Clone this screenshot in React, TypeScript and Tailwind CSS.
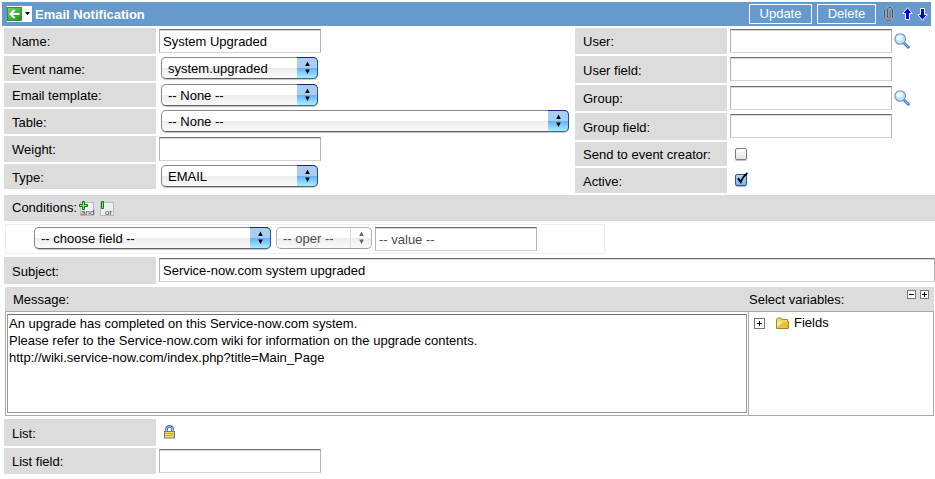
import type { ReactNode } from "react";

const fieldBox =
  "h-6 border border-[#b5b5b5] border-t-[#6f6f6f] border-b-[#d4d4d4] bg-white px-[3px] shadow-[inset_0_1px_0_#d8d8d8] outline-none";

function Row({ id, label, h, children }: { id: string; label: string; h: string; children: ReactNode }) {
  return (
    <div className={`flex items-stretch ${h}`}>
      <label htmlFor={id} className="flex w-[152px] shrink-0 items-center whitespace-nowrap bg-[#dcdcdc] pt-px pl-2">
        {label}
      </label>
      <div className="flex min-w-0 flex-1 items-start pt-px">{children}</div>
    </div>
  );
}

function TextField({ id, value = "", w = "w-[162px]" }: { id: string; value?: string; w?: string }) {
  return <input id={id} type="text" defaultValue={value} className={`ml-[3px] ${fieldBox} ${w}`} />;
}

function Picker({
  id,
  value,
  w,
  label,
  disabled = false,
}: {
  id: string;
  value: string;
  w: string;
  label?: string;
  disabled?: boolean;
}) {
  return (
    <span className={`relative block h-[22px] ${w}`}>
      <select
        id={id}
        aria-label={label}
        disabled={disabled}
        className={`block h-full w-full appearance-none rounded-[5px] border bg-gradient-to-b from-white from-50% via-[#ececec] via-50% to-[#fafafa] pt-px pl-1.5 outline-none ${
          disabled
            ? "border-[#b4b4b4] border-b-[#9c9c9c] text-[#4c4c4c] opacity-100"
            : "border-[#8a8a8a] border-b-[#5e5e5e] text-black shadow-[0_1px_1px_#c4c4c4]"
        }`}
      >
        <option>{value}</option>
      </select>
      <span
        className={`pointer-events-none absolute inset-y-0 right-0 flex w-[21px] items-center justify-center ${
          disabled
            ? "my-px mr-px rounded-r-[4px] border-l border-[#dedede]"
            : "rounded-r-[5px] border border-l-0 border-[#2b4f93] border-t-[#17267f] border-b-[#3c6b95] bg-gradient-to-b from-[#a9cdf3] from-50% via-[#63b0f4] via-50% to-[#a6f0ff]"
        }`}
      >
        <svg width="7" height="14" viewBox="0 0 7 14" fill={disabled ? "#666" : "#000"} aria-hidden="true">
          <path d="M3.5 0.5 L5.8 5 H1.2 Z M3.5 13 L5.8 8.5 H1.2 Z" />
        </svg>
      </span>
    </span>
  );
}

function LookupButton({ label }: { label: string }) {
  return (
    <button type="button" aria-label={label} className="ml-0.5 mt-1 h-4 w-4">
      <svg width="16" height="16" viewBox="0 0 16 16" aria-hidden="true">
        <path d="M10.5 10.5 L14.3 14.3" stroke="#3f6ea6" strokeWidth="2.8" strokeLinecap="round" />
        <path d="M10.8 10.6 L14 13.8" stroke="#8fc0ee" strokeWidth="1.2" strokeLinecap="round" />
        <circle cx="6.2" cy="6" r="5.3" fill="#bfe2fb" stroke="#6c93bf" strokeWidth="1.1" />
        <ellipse cx="5.4" cy="4.8" rx="3.2" ry="2.6" fill="#edf8ff" />
      </svg>
    </button>
  );
}

function Tick({ id, checked = false }: { id: string; checked?: boolean }) {
  return (
    <span className="relative ml-2 mt-[5px] block h-3 w-3">
      <input
        id={id}
        type="checkbox"
        defaultChecked={checked}
        className="peer block h-3 w-3 appearance-none rounded-[2px] border border-[#7d7d7d] bg-gradient-to-b from-white to-[#e2e2e2] shadow-[0_1px_1px_#bbb] checked:border-[#3a5488] checked:from-[#b5d4f5] checked:to-[#6db9f7]"
      />
      <svg
        className="pointer-events-none absolute -top-1 left-0 hidden peer-checked:block"
        width="14"
        height="16"
        viewBox="0 0 14 16"
        aria-hidden="true"
      >
        <path d="M3 8.2 L5.7 12 C7 8.6 9 5.6 12.4 3" fill="none" stroke="#000" strokeWidth="2" />
      </svg>
    </span>
  );
}

function Expander({ open = false, size, label }: { open?: boolean; size: number; label: string }) {
  const mid = size / 2;
  return (
    <button type="button" aria-label={label}>
      <svg width={size} height={size} viewBox={`0 0 ${size} ${size}`} className="block" aria-hidden="true">
        <rect x="0.5" y="0.5" width={size - 1} height={size - 1} fill="#fff" stroke="#777" />
        <path d={`M${mid - 2.5} ${mid} h5`} stroke="#000" />
        {!open && <path d={`M${mid} ${mid - 2.5} v5`} stroke="#000" />}
      </svg>
    </button>
  );
}

function ConditionButton({ kind }: { kind: "and" | "or" }) {
  return (
    <button type="button" aria-label={`Add ${kind} condition`} className="h-4 w-4">
      <svg width="16" height="16" viewBox="0 0 16 16" aria-hidden="true">
        <rect x="1.5" y="1.5" width="13" height="13" fill="#efefef" stroke="#b9b9b9" />
        {kind === "and" ? (
          <path d="M3.5 0.5 H5.5 V3.5 H8.5 V5.5 H5.5 V8.5 H3.5 V5.5 H0.5 V3.5 H3.5 Z" fill="#7ee07e" stroke="#0c7a0c" />
        ) : (
          <path d="M2.5 0.5 H4.5 V7.5 H2.5 Z" fill="#8fe58f" stroke="#0c7a0c" />
        )}
        <text x={kind === "and" ? 2 : 6} y="14" fontSize="8" fill="#444" fontFamily="Liberation Sans, Arial, sans-serif">
          {kind}
        </text>
      </svg>
    </button>
  );
}

function Header() {
  return (
    <header className="mr-1 ml-0.5 flex h-6 items-center bg-[#6699cc] pr-[3px] pl-[5px] text-white">
      <button type="button" aria-label="Back" className="flex h-4 w-[25px] items-center bg-white">
        <svg width="25" height="16" viewBox="0 0 25 16" aria-hidden="true">
          <defs>
            <linearGradient id="back" x1="0" y1="0" x2="1" y2="1">
              <stop offset="0" stopColor="#7fd36b" />
              <stop offset="1" stopColor="#18901c" />
            </linearGradient>
          </defs>
          <rect x="0.5" y="1.5" width="14" height="13" fill="url(#back)" stroke="#279a2b" />
          <path d="M12.5 8 H4 M7.5 4 L3.5 8 L7.5 12" fill="none" stroke="#fff" strokeWidth="2" />
          <path d="M18 6 H23 L20.5 9 Z" fill="#000" />
        </svg>
      </button>
      <h1 className="ml-[3px] flex-1 font-bold">Email Notification</h1>
      <button type="button" className="h-5 w-[63px] border border-white leading-4">
        Update
      </button>
      <button type="button" className="ml-[5px] h-5 w-[59px] border border-white leading-4">
        Delete
      </button>
      <button type="button" aria-label="Attachments" className="ml-[7px]">
        <svg width="11" height="16" viewBox="0 0 11 16" fill="none" aria-hidden="true">
          <path
            d="M7.2 4.5 V11 C7.2 12.6 4.4 12.6 4.4 11 V4 C4.4 0.6 9.5 0.6 9.5 4 V11.5 C9.5 15.4 1.6 15.4 1.6 11.5 V3.5"
            stroke="#c9c9c9"
            strokeWidth="1.6"
          />
          <path
            d="M7.2 4.5 V11 C7.2 12.6 4.4 12.6 4.4 11 V4 C4.4 0.6 9.5 0.6 9.5 4 V11.5 C9.5 15.4 1.6 15.4 1.6 11.5 V3.5"
            stroke="#4b5157"
          />
        </svg>
      </button>
      <button type="button" aria-label="Previous record" className="ml-2">
        <svg width="11" height="14" viewBox="0 0 11 14" aria-hidden="true">
          <path d="M5.5 0.7 L10.2 6.5 H7.5 V12.5 H3.5 V6.5 H0.8 Z" fill="#0000e6" stroke="#fff" />
        </svg>
      </button>
      <button type="button" aria-label="Next record" className="ml-1">
        <svg width="11" height="14" viewBox="0 0 11 14" aria-hidden="true">
          <path d="M5.5 13.3 L10.2 7.5 H7.5 V1.5 H3.5 V7.5 H0.8 Z" fill="#0000e6" stroke="#fff" />
        </svg>
      </button>
    </header>
  );
}

export default function App() {
  return (
    <main className="bg-white pt-0.5 font-['Liberation_Sans',Arial,sans-serif] text-[13px] leading-[17px] text-black">
      <Header />
      <form>
        <div className="mt-0.5 flex items-start pl-1">
          <div className="flex min-w-0 flex-1 flex-col gap-0.5">
            <Row id="name" label="Name:" h="h-[26px]">
              <TextField id="name" value="System Upgraded" />
            </Row>
            <Row id="event" label="Event name:" h="h-[25px]">
              <span className="w-[5px]" />
              <Picker id="event" value="system.upgraded" w="w-[157px]" />
            </Row>
            <Row id="template" label="Email template:" h="h-6">
              <span className="w-[5px]" />
              <Picker id="template" value="-- None --" w="w-[157px]" />
            </Row>
            <Row id="table" label="Table:" h="h-[25px]">
              <span className="w-[5px]" />
              <Picker id="table" value="-- None --" w="mr-1.5 flex-1" />
            </Row>
            <Row id="weight" label="Weight:" h="h-[26px]">
              <TextField id="weight" />
            </Row>
            <Row id="type" label="Type:" h="h-[25px]">
              <span className="w-[5px]" />
              <Picker id="type" value="EMAIL" w="w-[157px]" />
            </Row>
          </div>
          <div className="flex w-[360px] shrink-0 flex-col gap-0.5">
            <Row id="user" label="User:" h="h-[26px]">
              <TextField id="user" />
              <LookupButton label="Look up user" />
            </Row>
            <Row id="user-field" label="User field:" h="h-[27px]">
              <TextField id="user-field" />
            </Row>
            <Row id="group" label="Group:" h="h-[26px]">
              <TextField id="group" />
              <LookupButton label="Look up group" />
            </Row>
            <Row id="group-field" label="Group field:" h="h-[27px]">
              <TextField id="group-field" />
            </Row>
            <Row id="creator" label="Send to event creator:" h="h-6">
              <Tick id="creator" />
            </Row>
            <Row id="active" label="Active:" h="h-[25px]">
              <Tick id="active" checked />
            </Row>
          </div>
        </div>

        <div className="mt-0.5 ml-1 flex h-[26px] items-center bg-[#dcdcdc] pb-0.5 pl-2">
          <span className="w-[67px] whitespace-nowrap">Conditions:</span>
          <span className="flex gap-1 pt-1">
            <ConditionButton kind="and" />
            <ConditionButton kind="or" />
          </span>
        </div>
        <div className="mt-[3px] ml-[5px] flex h-[30px] max-w-[600px] items-start border border-[#eeeeee] pt-0.5 pl-7">
          <Picker id="cond-field" label="Field" value="-- choose field --" w="w-[237px]" />
          <span className="w-[5px]" />
          <Picker id="cond-oper" label="Operator" value="-- oper --" w="w-24" disabled />
          <input
            type="text"
            aria-label="Value"
            defaultValue="-- value --"
            className={`ml-[3px] w-[162px] text-[#4c4c4c] ${fieldBox}`}
          />
        </div>

        <div className="mt-[3px] pl-1">
          <Row id="subject" label="Subject:" h="h-[27px]">
            <TextField id="subject" value="Service-now.com system upgraded" w="flex-1" />
          </Row>
        </div>

        <section className="mt-[3px] mr-px ml-[5px]">
          <div className="flex h-6 bg-[#dcdcdc]">
            <label htmlFor="message" className="flex flex-1 items-center pl-2">
              Message:
            </label>
            <div className="flex w-[185px] items-center justify-between pr-[5px]">
              <span>Select variables:</span>
              <span className="flex gap-1 self-start pt-[3px]">
                <Expander open size={9} label="Collapse all" />
                <Expander size={9} label="Expand all" />
              </span>
            </div>
          </div>
          <div className="flex h-[105px] border border-[#aaaaaa]">
            <div className="flex flex-1 border-r border-[#aaaaaa] pt-0.5 pr-px pb-0.5 pl-px">
              <textarea
                id="message"
                className="block flex-1 resize-none border border-[#999999] border-t-[#707070] bg-white px-px outline-none"
                defaultValue={
                  "An upgrade has completed on this Service-now.com system.\nPlease refer to the Service-now.com wiki for information on the upgrade contents.\nhttp://wiki.service-now.com/index.php?title=Main_Page"
                }
              />
            </div>
            <div className="flex w-[184px] items-start pt-0.5 pl-[5px]">
              <span className="pt-0.5">
                <Expander size={11} label="Expand fields" />
              </span>
              <svg className="mt-0.5 ml-2.5" width="15" height="14" viewBox="0 0 15 14" aria-hidden="true">
                <path
                  d="M1.5 12.5 V3.5 L2.5 2 H6 L7.2 3.5 H12.5 V5.5 H13.5 V12.5 Z"
                  fill="#f1d766"
                  stroke="#a58611"
                />
                <path d="M2 6 H13 V12 H2 Z" fill="#e6c33c" />
                <path d="M2 11 L8 6 H2 Z" fill="#fbee9c" />
              </svg>
              <span className="ml-1">Fields</span>
            </div>
          </div>
        </section>

        <div className="mt-[3px] flex flex-col gap-0.5 pl-1">
          <Row id="list" label="List:" h="h-[27px]">
            <button id="list" type="button" aria-label="Unlock list" className="mt-[5px] ml-2">
              <svg width="11" height="14" viewBox="0 0 11 14" aria-hidden="true">
                <path d="M2.5 6 V4 C2.5 0.5 8.5 0.5 8.5 4 V6" fill="none" stroke="#2f5fb8" strokeWidth="2.6" />
                <path d="M2.5 6 V4 C2.5 0.7 8.5 0.7 8.5 4 V6" fill="none" stroke="#dbe9ff" strokeWidth="0.8" />
                <rect x="0.5" y="6.5" width="10" height="6.5" fill="#f3dd62" stroke="#5f82b0" />
                <path d="M1 8.5 H10 M1 10.5 H10" stroke="#cfab2a" />
              </svg>
            </button>
          </Row>
          <Row id="list-field" label="List field:" h="h-[26px]">
            <TextField id="list-field" />
          </Row>
        </div>
      </form>
    </main>
  );
}
